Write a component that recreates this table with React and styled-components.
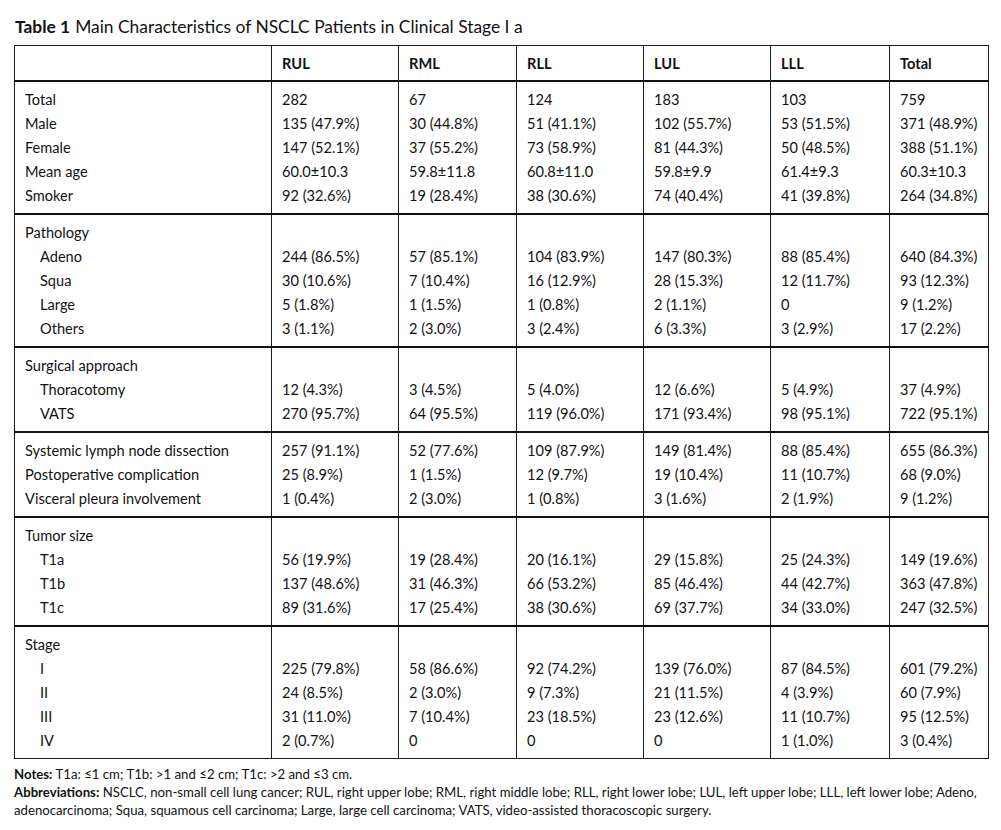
import React from "react";
import styled, { createGlobalStyle } from "styled-components";

const Global = createGlobalStyle`
  html, body { margin: 0; padding: 0; background: #fff; }
  body { font-family: "Lato", "Open Sans", sans-serif; color: #121212; }
`;

const Page = styled.div`
  width: 1001px;
  padding: 17px 13px 0 14px;
  box-sizing: border-box;
`;

const Title = styled.div`
  font-size: 17.4px;
  line-height: 20px;
  margin-bottom: 8px;
  padding-left: 1px;
  b { font-weight: 700; margin-right: 5px; }
`;

const Table = styled.table`
  width: 974px;
  border-collapse: collapse;
  table-layout: fixed;
  font-size: 14.6px;
  border: 1px solid #1a1a1a;
`;

const HeadCell = styled.th`
  height: 34px;
  padding: 0 0 0 10px;
  text-align: left;
  font-weight: 700;
  border-left: 1px solid #1a1a1a;
  border-bottom: 2px solid #111;
  vertical-align: middle;
`;

const Cell = styled.td`
  padding: 6px 0 5px 10px;
  vertical-align: top;
  border-left: 1px solid #1a1a1a;
  border-top: ${(p) => (p.$first ? "none" : "2px solid #111")};
`;

const Line = styled.div`
  height: 24px;
  line-height: 24px;
  white-space: nowrap;
  padding-left: ${(p) => (p.$indent ? "15px" : "0")};
`;

const Notes = styled.div`
  width: 976px;
  margin-top: 6px;
  font-size: 13.2px;
  line-height: 18px;
  b { font-weight: 700; }
`;

const cols = ["RUL", "RML", "RLL", "LUL", "LLL", "Total"];
const widths = [257, 127, 118, 127, 127, 119, 99];

const sections = [
  {
    rows: [
      ["Total", "282", "67", "124", "183", "103", "759"],
      ["Male", "135 (47.9%)", "30 (44.8%)", "51 (41.1%)", "102 (55.7%)", "53 (51.5%)", "371 (48.9%)"],
      ["Female", "147 (52.1%)", "37 (55.2%)", "73 (58.9%)", "81 (44.3%)", "50 (48.5%)", "388 (51.1%)"],
      ["Mean age", "60.0±10.3", "59.8±11.8", "60.8±11.0", "59.8±9.9", "61.4±9.3", "60.3±10.3"],
      ["Smoker", "92 (32.6%)", "19 (28.4%)", "38 (30.6%)", "74 (40.4%)", "41 (39.8%)", "264 (34.8%)"],
    ],
  },
  {
    head: "Pathology",
    rows: [
      ["Adeno", "244 (86.5%)", "57 (85.1%)", "104 (83.9%)", "147 (80.3%)", "88 (85.4%)", "640 (84.3%)"],
      ["Squa", "30 (10.6%)", "7 (10.4%)", "16 (12.9%)", "28 (15.3%)", "12 (11.7%)", "93 (12.3%)"],
      ["Large", "5 (1.8%)", "1 (1.5%)", "1 (0.8%)", "2 (1.1%)", "0", "9 (1.2%)"],
      ["Others", "3 (1.1%)", "2 (3.0%)", "3 (2.4%)", "6 (3.3%)", "3 (2.9%)", "17 (2.2%)"],
    ],
  },
  {
    head: "Surgical approach",
    rows: [
      ["Thoracotomy", "12 (4.3%)", "3 (4.5%)", "5 (4.0%)", "12 (6.6%)", "5 (4.9%)", "37 (4.9%)"],
      ["VATS", "270 (95.7%)", "64 (95.5%)", "119 (96.0%)", "171 (93.4%)", "98 (95.1%)", "722 (95.1%)"],
    ],
  },
  {
    rows: [
      ["Systemic lymph node dissection", "257 (91.1%)", "52 (77.6%)", "109 (87.9%)", "149 (81.4%)", "88 (85.4%)", "655 (86.3%)"],
      ["Postoperative complication", "25 (8.9%)", "1 (1.5%)", "12 (9.7%)", "19 (10.4%)", "11 (10.7%)", "68 (9.0%)"],
      ["Visceral pleura involvement", "1 (0.4%)", "2 (3.0%)", "1 (0.8%)", "3 (1.6%)", "2 (1.9%)", "9 (1.2%)"],
    ],
  },
  {
    head: "Tumor size",
    rows: [
      ["T1a", "56 (19.9%)", "19 (28.4%)", "20 (16.1%)", "29 (15.8%)", "25 (24.3%)", "149 (19.6%)"],
      ["T1b", "137 (48.6%)", "31 (46.3%)", "66 (53.2%)", "85 (46.4%)", "44 (42.7%)", "363 (47.8%)"],
      ["T1c", "89 (31.6%)", "17 (25.4%)", "38 (30.6%)", "69 (37.7%)", "34 (33.0%)", "247 (32.5%)"],
    ],
  },
  {
    head: "Stage",
    rows: [
      ["I", "225 (79.8%)", "58 (86.6%)", "92 (74.2%)", "139 (76.0%)", "87 (84.5%)", "601 (79.2%)"],
      ["II", "24 (8.5%)", "2 (3.0%)", "9 (7.3%)", "21 (11.5%)", "4 (3.9%)", "60 (7.9%)"],
      ["III", "31 (11.0%)", "7 (10.4%)", "23 (18.5%)", "23 (12.6%)", "11 (10.7%)", "95 (12.5%)"],
      ["IV", "2 (0.7%)", "0", "0", "0", "1 (1.0%)", "3 (0.4%)"],
    ],
  },
];

export default function App() {
  return (
    <>
      <Global />
      <Page>
        <Title>
          <b>Table 1</b>Main Characteristics of NSCLC Patients in Clinical Stage I a
        </Title>
        <Table>
          <colgroup>
            {widths.map((w, i) => (
              <col key={i} style={{ width: w }} />
            ))}
          </colgroup>
          <thead>
            <tr>
              <HeadCell />
              {cols.map((c) => (
                <HeadCell key={c}>{c}</HeadCell>
              ))}
            </tr>
          </thead>
          <tbody>
            {sections.map((s, si) => (
              <tr key={si}>
                {[0, 1, 2, 3, 4, 5, 6].map((ci) => (
                  <Cell key={ci} $first={si === 0}>
                    {s.head && <Line>{ci === 0 ? s.head : ""}</Line>}
                    {s.rows.map((r, ri) => (
                      <Line key={ri} $indent={ci === 0 && !!s.head}>
                        {r[ci]}
                      </Line>
                    ))}
                  </Cell>
                ))}
              </tr>
            ))}
          </tbody>
        </Table>
        <Notes>
          <b>Notes:</b> T1a: ≤1 cm; T1b: &gt;1 and ≤2 cm; T1c: &gt;2 and ≤3 cm.
          <br />
          <b>Abbreviations:</b> NSCLC, non-small cell lung cancer; RUL, right upper lobe; RML, right middle lobe; RLL, right lower lobe; LUL, left upper lobe; LLL, left lower lobe; Adeno, adenocarcinoma; Squa, squamous cell carcinoma; Large, large cell carcinoma; VATS, video-assisted thoracoscopic surgery.
        </Notes>
      </Page>
    </>
  );
}
